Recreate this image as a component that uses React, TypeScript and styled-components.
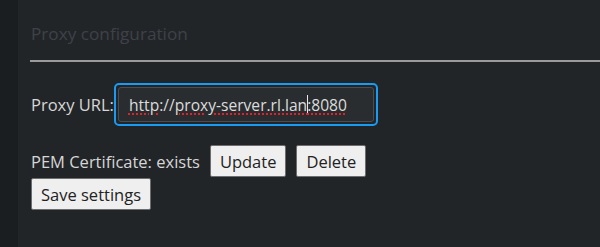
import styled, { createGlobalStyle } from 'styled-components'

const Globals = createGlobalStyle`
* {
	box-sizing: border-box;
}

html, body {
	margin: 0;
	padding: 0;
	height: 100%;
	background: #222528;
	font-family: 'Open Sans', 'Liberation Sans', sans-serif;
}

#root {
	height: 100%;
}
`

const Page = styled.div`
	display: flex;
	height: 247px;
	overflow: hidden;
`

const Sidebar = styled.aside`
	width: 18px;
	flex-shrink: 0;
	background: #1b1e21;
`

const Content = styled.main`
	flex: 1;
	padding: 20px 0 0 12px;
	color: #d6d6d6;
	font-size: 16.5px;
`

const Fieldset = styled.fieldset`
	border: 0;
	margin: 0;
	padding: 0;
`

const Legend = styled.legend`
	display: block;
	width: 100%;
	padding: 0 0 0 1px;
	height: 42px;
	font-size: 17.2px;
	line-height: 28px;
	color: #3e4248;
	border-bottom: 2px solid #9b9b9b;
`

const Row = styled.div<{ $gap?: number; $top?: number }>`
	display: flex;
	align-items: center;
	gap: ${p => p.$gap ?? 8}px;
	margin-top: ${p => p.$top ?? 0}px;
	padding-left: 1px;
`

const Label = styled.label`
	white-space: nowrap;
`

const Input = styled.div`
	width: 264px;
	height: 43px;
	border: 2px solid #1a9af0;
	border-radius: 5px;
	padding: 2px;
	background: #222528;
`

const InputInner = styled.div`
	height: 100%;
	border: 1px solid #4a4e53;
	border-radius: 3px;
	background: #2a2d30;
	padding: 0 10px;
	display: flex;
	align-items: center;
	font-size: 15.6px;
	color: #dcdcdc;
	white-space: nowrap;
`

const Misspelled = styled.span`
	text-decoration: underline dotted #e0202a;
	text-decoration-thickness: 2px;
	text-underline-offset: 3px;
`

const Caret = styled.span`
	display: inline-block;
	width: 1px;
	height: 19px;
	background: #e8e8e8;
	margin: 0 -1px 0 0;
	vertical-align: middle;
`

const Button = styled.button`
	font-family: inherit;
	font-size: 16.5px;
	color: #222;
	background: #efefef;
	border: 1px solid #6d6d6d;
	border-radius: 2px;
	height: 32px;
	padding: 0 9px;
	cursor: pointer;
`

export default function App() {
	return (
		<Page>
			<Globals />
			<Sidebar />
			<Content>
				<Fieldset>
					<Legend>Proxy configuration</Legend>
					<Row $top={21} $gap={0}>
						<Label>Proxy URL:</Label>
						<Input>
							<InputInner>
								<Misspelled>http</Misspelled>://<Misspelled>proxy-server.rl.lan</Misspelled>
								<Caret />
								<Misspelled>:8080</Misspelled>
							</InputInner>
						</Input>
					</Row>
					<Row $top={19} $gap={10}>
						<Label>PEM Certificate: exists</Label>
						<Button>Update</Button>
						<Button>Delete</Button>
					</Row>
					<Row $top={1}>
						<Button>Save settings</Button>
					</Row>
				</Fieldset>
			</Content>
		</Page>
	)
}
